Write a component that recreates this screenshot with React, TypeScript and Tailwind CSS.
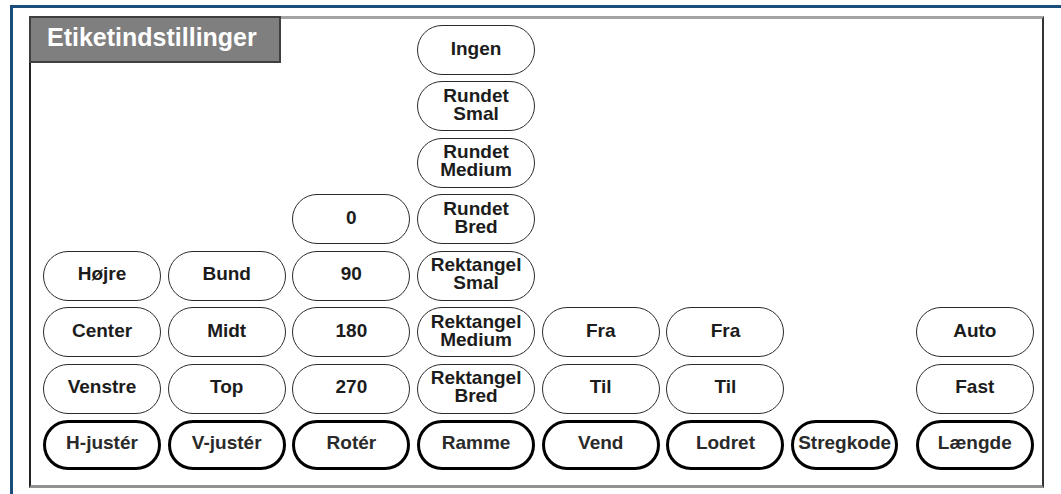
import { clsx } from 'clsx'

interface Item {
  label: string[]
  col: string
  row: string
  strong?: boolean
  narrow?: boolean
}

// grid placement, written out so tailwind picks the classes up
const items: Item[] = [
  { label: ['Højre'], col: 'col-start-1', row: 'row-start-5' },
  { label: ['Center'], col: 'col-start-1', row: 'row-start-6' },
  { label: ['Venstre'], col: 'col-start-1', row: 'row-start-7' },
  { label: ['H-justér'], col: 'col-start-1', row: 'row-start-8', strong: true },

  { label: ['Bund'], col: 'col-start-2', row: 'row-start-5' },
  { label: ['Midt'], col: 'col-start-2', row: 'row-start-6' },
  { label: ['Top'], col: 'col-start-2', row: 'row-start-7' },
  { label: ['V-justér'], col: 'col-start-2', row: 'row-start-8', strong: true },

  { label: ['0'], col: 'col-start-3', row: 'row-start-4' },
  { label: ['90'], col: 'col-start-3', row: 'row-start-5' },
  { label: ['180'], col: 'col-start-3', row: 'row-start-6' },
  { label: ['270'], col: 'col-start-3', row: 'row-start-7' },
  { label: ['Rotér'], col: 'col-start-3', row: 'row-start-8', strong: true },

  { label: ['Ingen'], col: 'col-start-4', row: 'row-start-1' },
  { label: ['Rundet', 'Smal'], col: 'col-start-4', row: 'row-start-2' },
  { label: ['Rundet', 'Medium'], col: 'col-start-4', row: 'row-start-3' },
  { label: ['Rundet', 'Bred'], col: 'col-start-4', row: 'row-start-4' },
  { label: ['Rektangel', 'Smal'], col: 'col-start-4', row: 'row-start-5' },
  { label: ['Rektangel', 'Medium'], col: 'col-start-4', row: 'row-start-6' },
  { label: ['Rektangel', 'Bred'], col: 'col-start-4', row: 'row-start-7' },
  { label: ['Ramme'], col: 'col-start-4', row: 'row-start-8', strong: true },

  { label: ['Fra'], col: 'col-start-5', row: 'row-start-6' },
  { label: ['Til'], col: 'col-start-5', row: 'row-start-7' },
  { label: ['Vend'], col: 'col-start-5', row: 'row-start-8', strong: true },

  { label: ['Fra'], col: 'col-start-6', row: 'row-start-6' },
  { label: ['Til'], col: 'col-start-6', row: 'row-start-7' },
  { label: ['Lodret'], col: 'col-start-6', row: 'row-start-8', strong: true },

  { label: ['Stregkode'], col: 'col-start-7', row: 'row-start-8', strong: true, narrow: true },

  { label: ['Auto'], col: 'col-start-8', row: 'row-start-6' },
  { label: ['Fast'], col: 'col-start-8', row: 'row-start-7' },
  { label: ['Længde'], col: 'col-start-8', row: 'row-start-8', strong: true },
]

function Pill({ item }: { item: Item }) {
  return (
    <div
      className={clsx(
        'flex h-[50px] flex-col items-center justify-center rounded-full bg-white pb-[3px] text-center text-[19px] font-bold leading-[18px]',
        item.col,
        item.row,
        item.strong ? 'border-[3px] border-black text-[#2a2a2a]' : 'border-[1.5px] border-[#2b2b2b] text-[#1c1c1c]',
        item.narrow ? 'w-[107px] justify-self-start' : 'w-full'
      )}
    >
      {item.label.map(l => (
        <span key={l} className="whitespace-nowrap">{l}</span>
      ))}
    </div>
  )
}

export default function App() {
  return (
    <div className="h-[494px] w-[1061px] overflow-hidden bg-white pl-[10px] pt-[5px] font-['Liberation_Sans',Arial,sans-serif]">
      <div className="h-[500px] border-l-[3px] border-t-[3px] border-[#1a4d7a] pl-[16px] pt-[8px]">
        <div className="h-[472px] w-[1015px] border-b-[3px] border-l-2 border-r-2 border-t-[3px] border-b-[#919191] border-l-[#222] border-r-[#333] border-t-[#a3a3a3] bg-white pl-[12px] pt-[6px]">
          <div className="grid grid-cols-[repeat(8,118px)] grid-rows-[repeat(8,50px)] gap-x-[6.7px] gap-y-[6.43px]">
            <div className="col-span-2 col-start-1 row-start-1 -ml-[14px] -mt-[9px] flex h-[47px] w-[252px] items-center self-start border-2 border-[#3f3f3f] bg-[#7f7f7f] pb-[4px] pl-[16px] text-[25px] font-bold leading-none text-white">
              Etiketindstillinger
            </div>
            {items.map((it, i) => (
              <Pill key={i} item={it} />
            ))}
          </div>
        </div>
      </div>
    </div>
  )
}
